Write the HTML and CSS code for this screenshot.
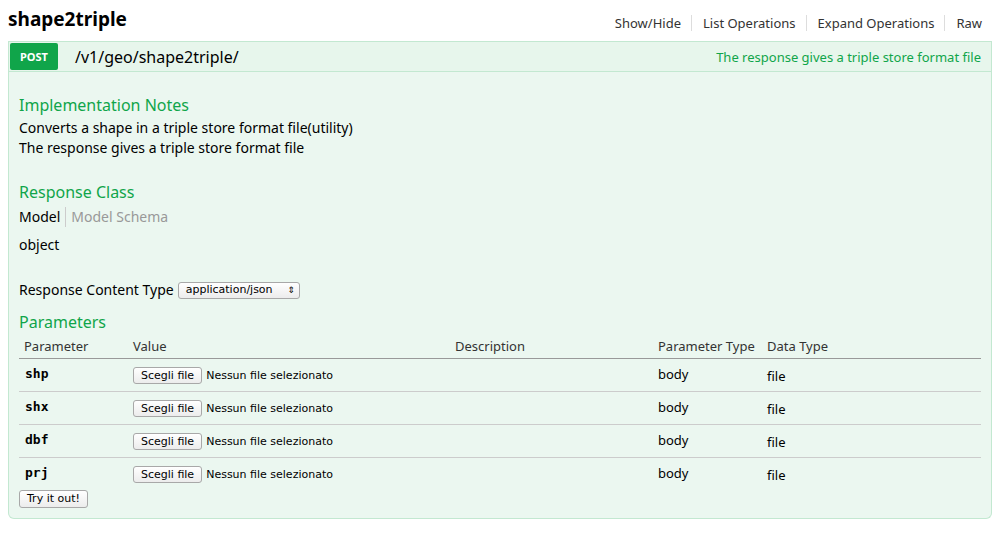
FILE: index.html
```html
<!DOCTYPE html>
<html>
<head>
<meta charset="utf-8">
<link rel="stylesheet" href="styles.css">
</head>
<body>
<div class="resource">
  <div class="res-head">
    <h2 class="res-title">shape2triple</h2>
    <ul class="res-links">
      <li>Show/Hide</li>
      <li>List Operations</li>
      <li>Expand Operations</li>
      <li>Raw</li>
    </ul>
  </div>
  <div class="op">
    <div class="op-heading">
      <span class="verb">POST</span>
      <span class="path">/v1/geo/shape2triple/</span>
      <span class="summary">The response gives a triple store format file</span>
    </div>
    <div class="op-content">
      <h4 class="sec first">Implementation Notes</h4>
      <p class="notes">Converts a shape in a triple store format file(utility)<br>The response gives a triple store format file</p>
      <h4 class="sec rc">Response Class</h4>
      <div class="model-tabs"><span class="tab active">Model</span><span class="tab">Model Schema</span></div>
      <div class="model">object</div>
      <div class="rct">Response Content Type <span class="select">application/json <span class="arrows">&#8661;</span></span></div>
      <h4 class="sec params">Parameters</h4>
      <table class="ptable">
        <thead>
          <tr><th class="c1">Parameter</th><th class="c2">Value</th><th class="c3">Description</th><th class="c4">Parameter Type</th><th class="c5">Data Type</th></tr>
        </thead>
        <tbody>
          <tr><td class="pname">shp</td><td><div class="vals"><span class="fbtn">Scegli file</span><span class="fname">Nessun file selezionato</span></div></td><td></td><td class="ptype">body</td><td class="dtype">file</td></tr>
          <tr><td class="pname">shx</td><td><div class="vals"><span class="fbtn">Scegli file</span><span class="fname">Nessun file selezionato</span></div></td><td></td><td class="ptype">body</td><td class="dtype">file</td></tr>
          <tr><td class="pname">dbf</td><td><div class="vals"><span class="fbtn">Scegli file</span><span class="fname">Nessun file selezionato</span></div></td><td></td><td class="ptype">body</td><td class="dtype">file</td></tr>
          <tr><td class="pname">prj</td><td><div class="vals"><span class="fbtn">Scegli file</span><span class="fname">Nessun file selezionato</span></div></td><td></td><td class="ptype">body</td><td class="dtype">file</td></tr>
        </tbody>
      </table>
      <div class="try">Try it out!</div>
    </div>
  </div>
</div>
</body>
</html>
```
FILE: styles.css
```css
html, body { margin: 0; padding: 0; background: #fff; }
body { font-family: "Noto Sans", "Open Sans", sans-serif; color: #000; }
.resource { padding: 0 8px; }
.res-head { display: flex; align-items: center; justify-content: space-between; height: 41px; }
.res-title { margin: 0; font-size: 19px; font-weight: bold; color: #000; position: relative; top: -2px; }
.res-links { list-style: none; margin: 0; padding: 0 10px 0 0; display: flex; font-size: 13px; color: #333; position: relative; top: 2px; }
.res-links li { padding: 0 10px 0 11px; border-left: 1px solid #ddd; line-height: 16px; }
.res-links li:first-child { border-left: none; }
.res-links li:last-child { padding-right: 0; }
.op-heading { display: flex; align-items: center; background: #e7f6ec; border: 1px solid #c3e8d1; height: 29px; padding: 0 10px 0 1px; }
.verb { background: #10a54a; color: #fff; font-size: 11px; font-weight: bold; width: 48px; height: 27px; line-height: 27px; text-align: center; border-radius: 2px; }
.path { font-size: 16px; margin-left: 17px; }
.summary { margin-left: auto; color: #10a54a; font-size: 13px; }
.op-content { background: #ebf7f0; border: 1px solid #c3e8d1; border-top: none; border-radius: 0 0 6px 6px; padding: 23px 10px 10px; }
.sec { margin: 0; font-size: 16px; font-weight: normal; color: #10a54a; line-height: 20px; }
.notes { margin: 3px 0 0; font-size: 14px; line-height: 20px; }
.sec.rc { margin-top: 24px; }
.model-tabs { margin-top: 5px; display: flex; font-size: 14px; line-height: 20px; }
.tab { padding-right: 5px; color: #999; }
.tab.active { color: #000; border-right: 1px solid #ccc; margin-right: 5px; }
.model { margin-top: 8px; font-size: 14px; line-height: 20px; }
.rct { margin-top: 25px; font-size: 14px; line-height: 20px; display: flex; align-items: center; }
.select { display: inline-flex; align-items: center; justify-content: space-between; margin-left: 4px; width: 109px; height: 15px; padding: 0 4px 0 7px; border: 1px solid #a8a8a8; border-radius: 3px; background: linear-gradient(#fff, #ececec); font-family: "DejaVu Sans", sans-serif; font-size: 11px; }
.arrows { font-size: 9px; }
.sec.params { margin-top: 12px; }
.ptable { width: 100%; border-collapse: collapse; margin-top: 2px; }
.ptable th { text-align: left; font-weight: normal; font-size: 13px; color: #333; padding: 4px 0 3px 5px; border-bottom: 1px solid #999; line-height: 17px; }
.c1 { width: 104px; }
.c2 { width: 317px; }
.c3 { width: 198px; }
.c4 { width: 104px; }
.ptable td { padding: 6px 0 6px 5px; border-bottom: 1px solid #ccc; vertical-align: top; font-size: 13px; height: 20px; line-height: 18px; }
.ptable tbody tr:last-child td { border-bottom: none; }
.pname { font-family: "DejaVu Sans Mono", monospace; font-weight: bold; font-size: 13px; padding-left: 6px !important; }
.vals { display: flex; align-items: center; height: 20px; }
.fbtn { font-family: "DejaVu Sans", sans-serif; font-size: 11px; height: 15px; line-height: 15px; padding: 0 7px; border: 1px solid #a8a8a8; border-radius: 3px; background: linear-gradient(#fff, #ececec); }
.fname { font-family: "DejaVu Sans", sans-serif; font-size: 11px; margin-left: 4px; line-height: 15px; }
.ptype { font-size: 13px; }
.dtype { font-size: 13px; padding-top: 8px !important; padding-bottom: 4px !important; }
.try { width: fit-content; font-family: "DejaVu Sans", sans-serif; font-size: 11px; height: 16px; line-height: 16px; padding: 0 7px; border: 1px solid #a8a8a8; border-radius: 3px; background: linear-gradient(#fff, #ececec); }
```
